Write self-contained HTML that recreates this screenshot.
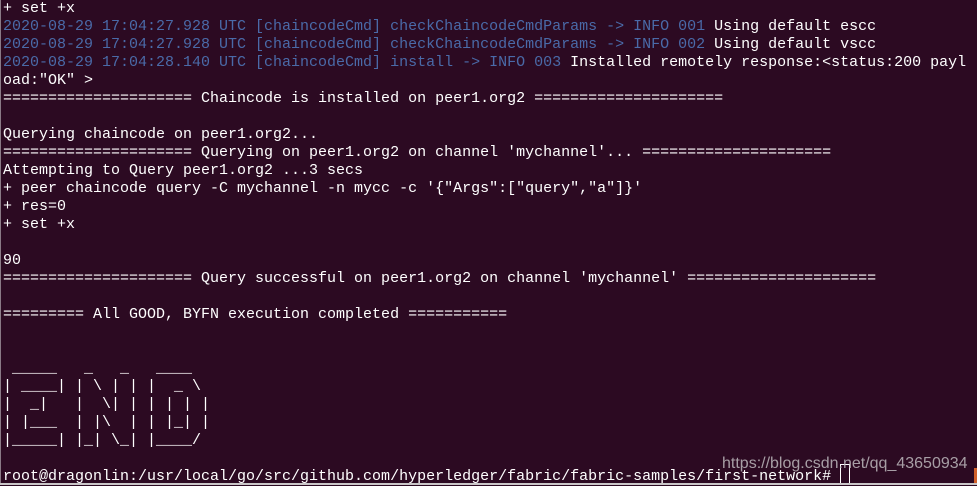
<!DOCTYPE html>
<html><head><meta charset="utf-8"><style>
html,body{margin:0;padding:0}
body{width:977px;height:485px;background:#2c0a22;overflow:hidden;position:relative}
pre{margin:0;position:absolute;left:3px;top:0px;font-family:"Liberation Mono",monospace;font-size:15px;line-height:18px;color:#ffffff;white-space:pre}
.b{color:#4a6aa8}
#lb{position:absolute;left:0;top:0;width:1px;height:485px;background:#8a7a86}
#bb{position:absolute;left:0;top:483px;width:977px;height:2px;background:#c9c6c8}
#wm{position:absolute;left:722px;top:455px;font-family:"Liberation Sans",sans-serif;font-size:16px;color:#bdb8bc;opacity:.85}
#cur{position:absolute;left:840px;top:464px;width:8px;height:18px;border:1px solid #ffffff}
#or{position:absolute;left:974px;top:468px;width:3px;height:15px;background:#d0602a}
</style></head><body>
<div id="lb"></div>
<pre>+ set +x
<span class="b">2020-08-29 17:04:27.928 UTC [chaincodeCmd] checkChaincodeCmdParams -&gt; INFO 001</span> Using default escc
<span class="b">2020-08-29 17:04:27.928 UTC [chaincodeCmd] checkChaincodeCmdParams -&gt; INFO 002</span> Using default vscc
<span class="b">2020-08-29 17:04:28.140 UTC [chaincodeCmd] install -&gt; INFO 003</span> Installed remotely response:&lt;status:200 payl
oad:"OK" &gt;
===================== Chaincode is installed on peer1.org2 =====================

Querying chaincode on peer1.org2...
===================== Querying on peer1.org2 on channel 'mychannel'... =====================
Attempting to Query peer1.org2 ...3 secs
+ peer chaincode query -C mychannel -n mycc -c '{"Args":["query","a"]}'
+ res=0
+ set +x

90
===================== Query successful on peer1.org2 on channel 'mychannel' =====================

========= All GOOD, BYFN execution completed ===========


 _____   _   _   ____   
| ____| | \ | | |  _ \  
|  _|   |  \| | | | | | 
| |___  | |\  | | |_| | 
|_____| |_| \_| |____/  

root@dragonlin:/usr/local/go/src/github.com/hyperledger/fabric/fabric-samples/first-network# </pre>
<div id="cur"></div>
<div id="wm">https://blog.csdn.net/qq_43650934</div>
<div id="or"></div>
<div id="bb"></div>
</body></html>
